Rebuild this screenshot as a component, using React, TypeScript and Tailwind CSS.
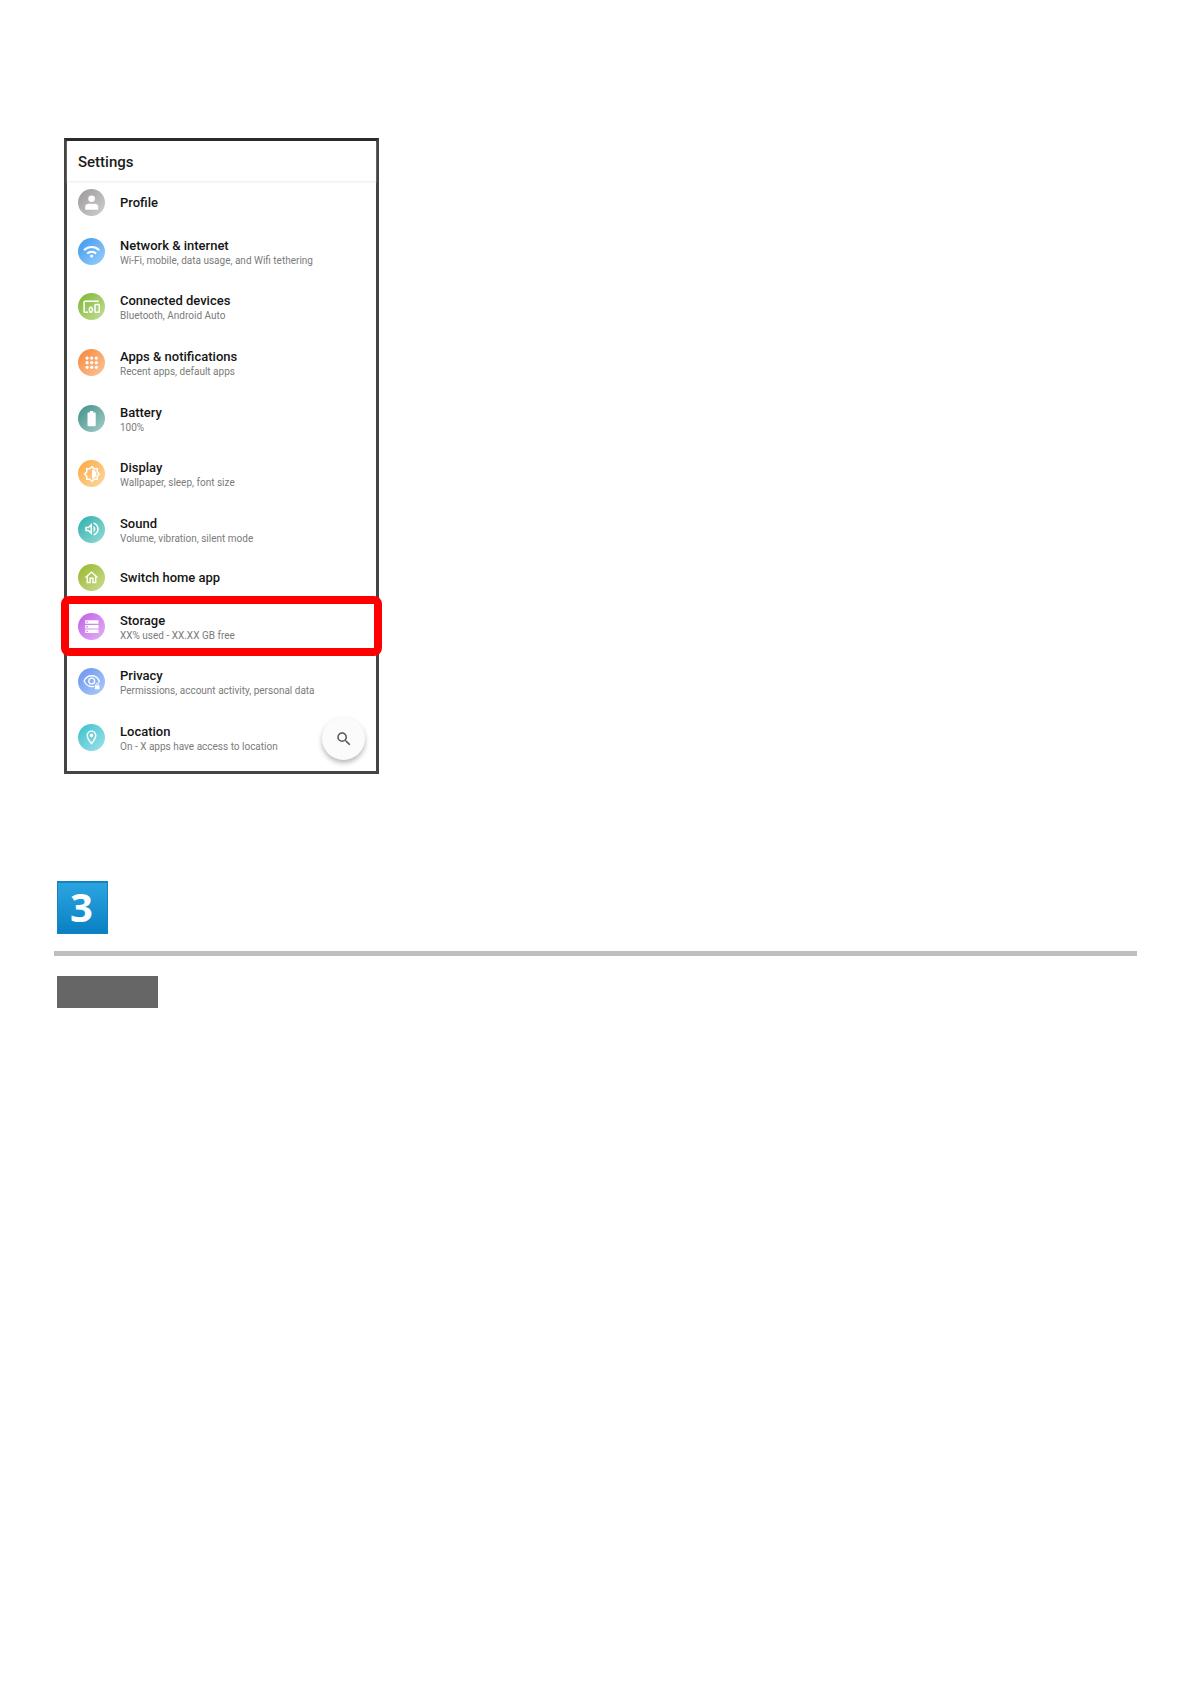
import { FC, ReactNode } from "react";
import {
  MdOutlineBrightnessMedium,
  MdOutlineHome,
  MdOutlineLocationOn,
  MdOutlineVolumeUp,
  MdSearch,
} from "react-icons/md";

interface Item {
  title: string;
  summary?: string;
  color: string;
  icon: ReactNode;
  highlighted?: boolean;
}

const Glyph: FC<{ children: ReactNode }> = ({ children }) => (
  <svg viewBox="0 0 27 27" className="size-[27px]" fill="none" aria-hidden="true">
    {children}
  </svg>
);

const items: Item[] = [
  {
    title: "Profile",
    color: "from-[#9a9898] to-[#d2d0d0]",
    icon: (
      <Glyph>
        <circle cx="13.6" cy="9.7" r="3.3" fill="white" />
        <path d="M7.2 20.8v-3c0-2 1.6-3.1 3.6-3.1h5.8c2 0 3.6 1.1 3.6 3.1v3z" fill="white" />
      </Glyph>
    ),
  },
  {
    title: "Network & internet",
    summary: "Wi-Fi, mobile, data usage, and Wifi tethering",
    color: "from-[#3497ee] to-[#9bcffa]",
    icon: (
      <Glyph>
        <path
          d="M6 12.2c4.3-4.2 11-4.2 15.3 0M9.2 15.5c2.5-2.5 6.4-2.5 8.900 0"
          stroke="white"
          strokeWidth="2"
        />
        <circle cx="13.6" cy="18" r="1.6" fill="white" />
      </Glyph>
    ),
  },
  {
    title: "Connected devices",
    summary: "Bluetooth, Android Auto",
    color: "from-[#7db528] to-[#c3df94]",
    icon: (
      <Glyph>
        <path d="M20.8 8.3H6.9q-.8 0-.8.8v9.4q0 .8.8.8h3.300" stroke="white" strokeWidth="1.5" />
        <rect x="17" y="11.6" width="4.300" height="7.700" rx="0.6" stroke="white" strokeWidth="1.500" />
        <circle cx="12.900" cy="16.700" r="1.800" stroke="white" strokeWidth="1.300" />
        <path d="M11.900 14.800v-.8h2v.8M11.900 18.600v.9h2v-.9" stroke="white" />
      </Glyph>
    ),
  },
  {
    title: "Apps & notifications",
    summary: "Recent apps, default apps",
    color: "from-[#f5842c] to-[#fcc79c]",
    icon: (
      <Glyph>
        {[9.1, 13.7, 18.3].map((y) =>
          [9.1, 13.7, 18.3].map((x) => <circle key={`${x}-${y}`} cx={x} cy={y} r="1.6" fill="white" />)
        )}
      </Glyph>
    ),
  },
  {
    title: "Battery",
    summary: "100%",
    color: "from-[#3b8f88] to-[#a5d0cb]",
    icon: (
      <Glyph>
        <path
          d="M10.4 7.5h1.5V6h3.4v1.5h1.500q.9 0 .9.9v11.900q0 .9-.9.900h-6.400q-.9 0-.9-.9V8.400q0-.9.900-.9z"
          fill="white"
        />
      </Glyph>
    ),
  },
  {
    title: "Display",
    summary: "Wallpaper, sleep, font size",
    color: "from-[#fba83a] to-[#fdd8a0]",
    icon: <MdOutlineBrightnessMedium className="size-[18px]" />,
  },
  {
    title: "Sound",
    summary: "Volume, vibration, silent mode",
    color: "from-[#1db0ac] to-[#90dbd6]",
    icon: <MdOutlineVolumeUp className="size-[18px]" />,
  },
  {
    title: "Switch home app",
    color: "from-[#98b820] to-[#cddb8c]",
    icon: <MdOutlineHome className="size-[17px]" />,
  },
  {
    title: "Storage",
    summary: "XX% used - XX.XX GB free",
    color: "from-[#bf5ce6] to-[#e3b1f5]",
    highlighted: true,
    icon: (
      <Glyph>
        <path
          d="M7.2 7.3h13.3v3.5H7.2zM7.2 12h13.300v3.500H7.200zM7.200 16.600h13.300v3.500H7.200z"
          fill="white"
        />
        <path
          d="M8.500 8.400h1.300v1.300H8.500zM8.500 13.100h1.300v1.300H8.500zM8.500 17.700h1.300V19H8.500z"
          fill="#cb78ec"
        />
      </Glyph>
    ),
  },
  {
    title: "Privacy",
    summary: "Permissions, account activity, personal data",
    color: "from-[#6a94ee] to-[#aecbfa]",
    icon: (
      <Glyph>
        <path
          d="M16 18.3c-4.500 1-8.300-1.500-9.900-5.300 3-7 12.200-7 15.200 0q-.3.900-.8 1.600"
          stroke="white"
          strokeWidth="1.3"
        />
        <circle cx="13.7" cy="13" r="2.9" stroke="white" strokeWidth="1.3" />
        <rect x="16.9" y="17.2" width="4.6" height="4" rx="0.5" fill="white" />
        <path d="M17.900 17.400v-.8c0-1.700 2.600-1.700 2.600 0v.8" stroke="white" />
      </Glyph>
    ),
  },
  {
    title: "Location",
    summary: "On - X apps have access to location",
    color: "from-[#2fc0cc] to-[#9be3e8]",
    icon: <MdOutlineLocationOn className="size-[17px]" />,
  },
];

const SettingsItem: FC<{ item: Item }> = ({ item }) => {
  const { title, summary, color, icon, highlighted } = item;
  return (
    <li className={summary ? "relative flex grow-4 basis-0" : "relative flex grow-3 basis-0"}>
      <a href="#" className="flex flex-1 items-center gap-[15px] pl-[11px]">
        <span
          className={`flex size-[27px] shrink-0 items-center justify-center rounded-full bg-linear-to-br text-white ${color}`}
        >
          {icon}
        </span>
        <span className={summary ? "pt-[3px]" : "pt-px"}>
          <span className="block text-[13px] leading-4 font-medium text-[#151515]">{title}</span>
          {summary && <span className="block text-[10px] leading-[14px] text-[#7b7b7b]">{summary}</span>}
        </span>
      </a>
      {highlighted && (
        <span className="pointer-events-none absolute -inset-x-[6px] -inset-y-[2px] z-10 rounded-lg border-8 border-[#fe0000]" />
      )}
    </li>
  );
};

export default function App() {
  return (
    <main className="min-h-screen bg-white px-[54px] pt-[138px] pb-12 font-['Roboto',sans-serif]">
      <section className="relative ml-[10px] w-full max-w-[315px] border-3 border-[#444444] border-t-[#2c2a2b] bg-white pb-[6px]">
        <header className="flex h-[41px] items-center border-b border-[#f2f2f2] pt-[2px] pl-[11px] shadow-[0_1px_1px_#f8f8f8]">
          <h1 className="text-[15px] leading-5 font-medium text-[#1c1c1c]">Settings</h1>
        </header>
        <ul className="flex min-h-[583px] flex-col">
          {items.map((item) => (
            <SettingsItem key={item.title} item={item} />
          ))}
        </ul>
        <button
          type="button"
          aria-label="Search"
          className="absolute right-[11px] bottom-[11px] flex size-[43px] items-center justify-center rounded-full bg-[#fbfbfb] text-[#555555] shadow-[0_3px_5px_rgba(0,0,0,0.28)]"
        >
          <MdSearch className="size-[18px]" />
        </button>
      </section>

      <div className="mt-[107px] ml-[3px] flex h-[53px] w-[51px] items-center justify-center border border-t-2 border-[#1583bd] bg-linear-to-b from-[#2aa5e0] to-[#0880c4] pr-[2px] pb-[2px] font-['Open_Sans',sans-serif] text-[40px] leading-none font-bold text-white">
        3
      </div>
      <hr className="mt-[17px] border-0 border-t-5 border-[#bfbfbf]" />
      <div className="mt-5 ml-[3px] h-8 w-[101px] bg-[#666666]" />
    </main>
  );
}
